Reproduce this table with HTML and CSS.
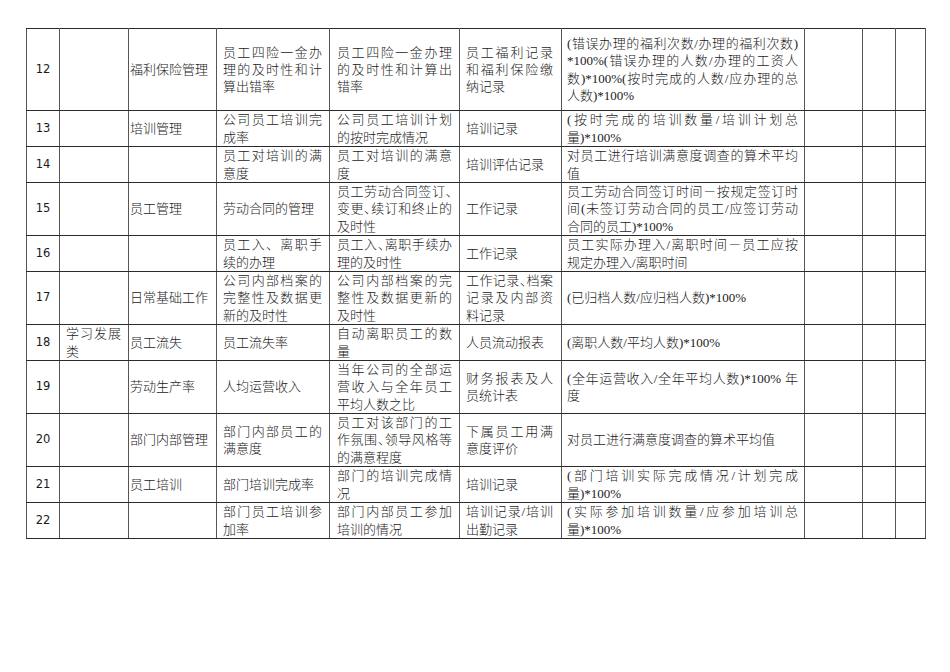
FILE: index.html
```html
<!DOCTYPE html>
<html lang="zh-CN">
<head>
<meta charset="utf-8">
<title>人力资源考核指标</title>
<link rel="stylesheet" href="styles.css">
</head>
<body>
<div class="page">
<table class="kpi">
<colgroup>
<col class="w-no"><col class="w-cat"><col class="w-item"><col class="w-ind"><col class="w-def"><col class="w-src"><col class="w-calc"><col class="w-a"><col class="w-b"><col class="w-c">
</colgroup>
<tbody>
<tr class="r82">
<td class="no">12</td><td class="cat"></td><td class="item">福利保险管理</td>
<td class="ind"><span class="j">员工四险一金办</span><span class="j">理的及时性和计</span>算出错率</td>
<td class="def"><span class="j">员工四险一金办理</span><span class="j">的及时性和计算出</span>错率</td>
<td class="src"><span class="j">员工福利记录</span><span class="j">和福利保险缴</span>纳记录</td>
<td class="calc"><span class="j">(错误办理的福利次数/办理的福利次数)</span><span class="j">*100%(错误办理的人数/办理的工资人</span><span class="j">数)*100%(按时完成的人数/应办理的总</span>人数)*100%</td>
<td></td><td></td><td></td>
</tr>
<tr class="r36">
<td class="no">13</td><td class="cat"></td><td class="item">培训管理</td>
<td class="ind"><span class="j">公司员工培训完</span>成率</td>
<td class="def"><span class="j">公司员工培训计划</span>的按时完成情况</td>
<td class="src">培训记录</td>
<td class="calc"><span class="j">(按时完成的培训数量/培训计划总</span>量)*100%</td>
<td></td><td></td><td></td>
</tr>
<tr class="r36">
<td class="no">14</td><td class="cat"></td><td class="item"></td>
<td class="ind"><span class="j">员工对培训的满</span>意度</td>
<td class="def"><span class="j">员工对培训的满意</span>度</td>
<td class="src">培训评估记录</td>
<td class="calc"><span class="j">对员工进行培训满意度调查的算术平均</span>值</td>
<td></td><td></td><td></td>
</tr>
<tr class="r53">
<td class="no">15</td><td class="cat"></td><td class="item">员工管理</td>
<td class="ind">劳动合同的管理</td>
<td class="def"><span class="j">员工劳动合同签订、</span><span class="j">变更、续订和终止的</span>及时性</td>
<td class="src">工作记录</td>
<td class="calc"><span class="j">员工劳动合同签订时间－按规定签订时</span><span class="j">间(未签订劳动合同的员工/应签订劳动</span>合同的员工)*100%</td>
<td></td><td></td><td></td>
</tr>
<tr class="r36">
<td class="no">16</td><td class="cat"></td><td class="item"></td>
<td class="ind"><span class="j">员工入、离职手</span>续的办理</td>
<td class="def"><span class="j">员工入、离职手续办</span>理的及时性</td>
<td class="src">工作记录</td>
<td class="calc"><span class="j">员工实际办理入/离职时间－员工应按</span>规定办理入/离职时间</td>
<td></td><td></td><td></td>
</tr>
<tr class="r53">
<td class="no">17</td><td class="cat"></td><td class="item">日常基础工作</td>
<td class="ind"><span class="j">公司内部档案的</span><span class="j">完整性及数据更</span>新的及时性</td>
<td class="def"><span class="j">公司内部档案的完</span><span class="j">整性及数据更新的</span>及时性</td>
<td class="src"><span class="j">工作记录、档案</span><span class="j">记录及内部资</span>料记录</td>
<td class="calc">(已归档人数/应归档人数)*100%</td>
<td></td><td></td><td></td>
</tr>
<tr class="r36">
<td class="no">18</td><td class="cat"><span class="j">学习发展</span>类</td><td class="item">员工流失</td>
<td class="ind">员工流失率</td>
<td class="def"><span class="j">自动离职员工的数</span>量</td>
<td class="src">人员流动报表</td>
<td class="calc">(离职人数/平均人数)*100%</td>
<td></td><td></td><td></td>
</tr>
<tr class="r53">
<td class="no">19</td><td class="cat"></td><td class="item">劳动生产率</td>
<td class="ind">人均运营收入</td>
<td class="def"><span class="j">当年公司的全部运</span><span class="j">营收入与全年员工</span>平均人数之比</td>
<td class="src"><span class="j">财务报表及人</span>员统计表</td>
<td class="calc"><span class="j">(全年运营收入/全年平均人数)*100% 年</span>度</td>
<td></td><td></td><td></td>
</tr>
<tr class="r53">
<td class="no">20</td><td class="cat"></td><td class="item">部门内部管理</td>
<td class="ind"><span class="j">部门内部员工的</span>满意度</td>
<td class="def"><span class="j">员工对该部门的工</span><span class="j">作氛围、领导风格等</span>的满意程度</td>
<td class="src"><span class="j">下属员工用满</span>意度评价</td>
<td class="calc">对员工进行满意度调查的算术平均值</td>
<td></td><td></td><td></td>
</tr>
<tr class="r36">
<td class="no">21</td><td class="cat"></td><td class="item">员工培训</td>
<td class="ind">部门培训完成率</td>
<td class="def"><span class="j">部门的培训完成情</span>况</td>
<td class="src">培训记录</td>
<td class="calc"><span class="j">(部门培训实际完成情况/计划完成</span>量)*100%</td>
<td></td><td></td><td></td>
</tr>
<tr class="r36">
<td class="no">22</td><td class="cat"></td><td class="item"></td>
<td class="ind"><span class="j">部门员工培训参</span>加率</td>
<td class="def"><span class="j">部门内部员工参加</span>培训的情况</td>
<td class="src"><span class="j">培训记录/培训</span>出勤记录</td>
<td class="calc"><span class="j">(实际参加培训数量/应参加培训总</span>量)*100%</td>
<td></td><td></td><td></td>
</tr>
</tbody>
</table>
</div>
</body>
</html>
```
FILE: styles.css
```css
html, body {
  margin: 0;
  padding: 0;
  background: #ffffff;
}

.page {
  padding: 28px 0 0 26px;
}

.kpi {
  border-collapse: collapse;
  table-layout: fixed;
  width: 899px;
  font-family: "Liberation Serif", "Noto Sans CJK SC", serif;
  font-size: 13px;
  font-weight: 300;
  line-height: 17.3px;
  color: #1a1a1a;
}

.w-no { width: 33px; }
.w-cat { width: 69px; }
.w-item { width: 88px; }
.w-ind { width: 113px; }
.w-def { width: 130px; }
.w-src { width: 102px; }
.w-calc { width: 243px; }
.w-a { width: 58px; }
.w-b { width: 33px; }
.w-c { width: 30px; }

.kpi td {
  border-top: 1px solid #2a2a2a;
  border-bottom: 1px solid #2a2a2a;
  border-left: 1px solid #555555;
  border-right: 1px solid #555555;
  padding: 0 7px 0 6px;
  vertical-align: middle;
  text-align: left;
}

.r82 { height: 82px; }
.r53 { height: 53px; }
.r36 { height: 36px; }

.kpi td.no {
  font-family: "DejaVu Sans", sans-serif;
  font-size: 11.5px;
  font-weight: 400;
  text-align: center;
  padding: 0;
}

.kpi td.item {
  padding: 0 2px 0 1px;
}

.kpi td.def,
.kpi td.src {
  font-feature-settings: "halt";
}

.kpi td.def {
  padding: 0 7px 0 7px;
}

.kpi td.src {
  padding: 0 8px 0 6px;
}

.kpi td.calc {
  padding: 0 6px 0 5px;
}

.j {
  display: block;
  white-space: nowrap;
  text-align: justify;
  text-align-last: justify;
}
```
